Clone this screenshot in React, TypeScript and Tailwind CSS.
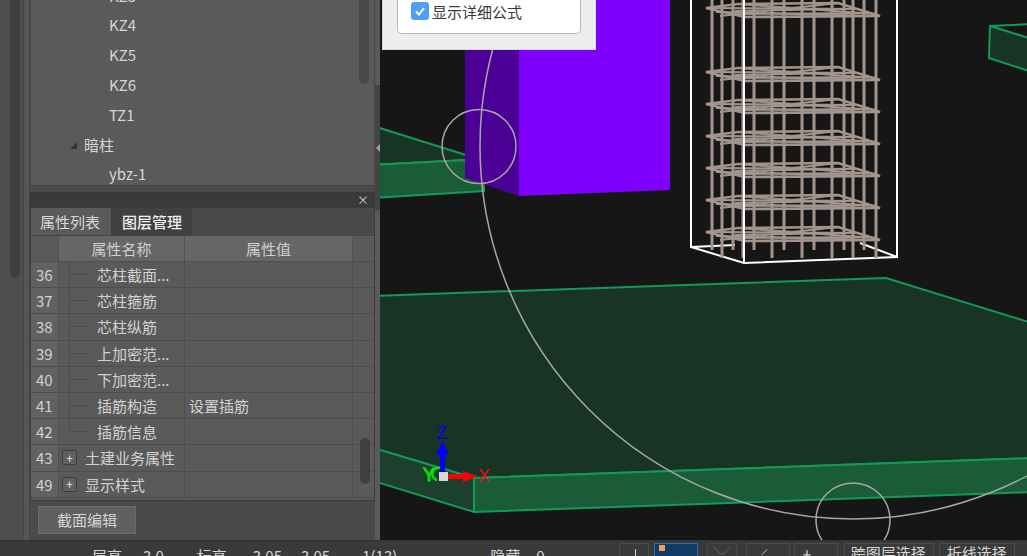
const FONT = "font-['Noto_Sans_CJK_SC','Noto_Sans',sans-serif]";

const TREE_ROWS = [
  { label: 'KZ3', indent: 'pl-[78px]' },
  { label: 'KZ4', indent: 'pl-[78px]' },
  { label: 'KZ5', indent: 'pl-[78px]' },
  { label: 'KZ6', indent: 'pl-[78px]' },
  { label: 'TZ1', indent: 'pl-[78px]' },
  { label: '暗柱', indent: 'pl-[55px]', group: true },
  { label: 'ybz-1', indent: 'pl-[78px]' },
];

const PROP_ROWS = [
  { no: 36, name: '芯柱截面...' },
  { no: 37, name: '芯柱箍筋' },
  { no: 38, name: '芯柱纵筋' },
  { no: 39, name: '上加密范...' },
  { no: 40, name: '下加密范...' },
  { no: 41, name: '插筋构造', value: '设置插筋' },
  { no: 42, name: '插筋信息', last: true },
  { no: 43, name: '土建业务属性', plus: true },
  { no: 49, name: '显示样式', plus: true },
];

const BAR_X = [712, 722, 733, 743, 754, 772, 784, 802, 814, 832, 844, 853, 864, 876];
const STIRRUP_Y = [-22, 8, 72, 104, 136, 168, 200, 232];

function Stirrup({ y }: { y: number }) {
  return (
    <g>
      <path d={`M706 ${y}L745 ${y + 9}L880 ${y + 8}L838 ${y - 5}L738 ${y - 4}Z`} strokeWidth="2.6" />
      <path d={`M706 ${y}L858 ${y + 1}M716 ${y + 4}L880 ${y + 8}M738 ${y - 4}L876 ${y + 6}`} strokeWidth="2.2" />
      <path d={`M720 ${y + 8}L838 ${y - 5}M735 ${y + 3}L845 ${y + 1}M745 ${y + 6}L868 ${y + 5}`} strokeWidth="2" />
    </g>
  );
}

function Scene() {
  return (
    <svg viewBox="380 0 647 540" className="block h-full w-full">
      <rect x="380" y="0" width="647" height="540" fill="#161616" />

      {/* left slab */}
      <polygon points="370,125 466,155 466,160 370,165" fill="#183425" stroke="#139a58" strokeWidth="2" />
      <polygon points="370,165 466,160 484,185 484,191 370,198" fill="#1a5c38" stroke="#139a58" strokeWidth="2" />

      {/* column */}
      <polygon points="465,0 519,0 519,196 465,178" fill="#4b0096" />
      <polygon points="519,0 670,0 670,190 519,196" fill="#8000ff" />

      {/* floor slab */}
      <polygon points="370,296 886,278 1035,324 1035,458 474,478 370,447" fill="#183425" stroke="#139a58" strokeWidth="2" />
      <polygon points="370,447 474,478 474,512 370,480" fill="#1c3f2e" stroke="#139a58" strokeWidth="2" />
      <polygon points="474,478 1035,458 1035,492 474,512" fill="#1a5c38" stroke="#139a58" strokeWidth="2" />

      {/* beam on the right */}
      <polygon points="990,26 1035,24 1035,40" fill="#161616" stroke="#139a58" strokeWidth="2" />
      <polygon points="990,26 1035,40 1035,73 989,58" fill="#183425" stroke="#139a58" strokeWidth="2" />

      {/* bounding box */}
      <g stroke="#ffffff" strokeWidth="2" fill="none">
        <path d="M691 -5V247L744 263L897 257V-5M691 247L735 245M860 243L897 257" />
      </g>

      {/* rebar cage */}
      <g stroke="#a3948c" strokeWidth="3" fill="none">
        {BAR_X.map((x, i) => (
          <path key={x} d={`M${x} 0V${i % 2 ? 258 : 250}`} />
        ))}
        {STIRRUP_Y.map((y) => (
          <Stirrup key={y} y={y} />
        ))}
      </g>

      <path d="M744 0V263" stroke="#ffffff" strokeWidth="2" fill="none" />

      {/* grips */}
      <g fill="none" stroke="#aaa6a2" strokeWidth="1.5">
        <circle cx="853" cy="146" r="373" />
        <circle cx="479" cy="146.5" r="37" />
        <circle cx="853" cy="520" r="37" />
      </g>

      {/* axes */}
      <rect x="440" y="449" width="5" height="26" fill="#0000ff" />
      <polygon points="442.5,441 449,455 436,455" fill="#0000ff" />
      <text x="442" y="439" textAnchor="middle" fontSize="18" fill="#0000e6" fontFamily="Liberation Sans, sans-serif">Z</text>
      <rect x="447" y="474" width="17" height="5" fill="#ff0000" />
      <polygon points="478,476.5 463,471 463,482" fill="#ff0000" />
      <text x="484" y="482" textAnchor="middle" fontSize="18" fill="#e01010" fontFamily="Liberation Sans, sans-serif">X</text>
      <text x="429" y="481" textAnchor="middle" fontSize="18" fill="#00e600" stroke="#00e600" strokeWidth="1" fontFamily="Liberation Sans, sans-serif">Y</text>
      <path d="M440 468A5 5 0 0 0 437 480" fill="none" stroke="#00e600" strokeWidth="2.5" />
      <rect x="439" y="472" width="9" height="9" fill="#d8d8d8" />
    </svg>
  );
}

function PropRow({ row }: { row: (typeof PROP_ROWS)[number] }) {
  return (
    <div className="flex h-[26.2px] border-b border-[#4d4d4d] text-[15px] leading-[25px] text-[#d2d2d2]">
      <div className="w-[27px] bg-[#616161] pl-[5px]">{row.no}</div>
      <div className="flex w-[126px] border-l border-[#525252]">
        {row.plus ? (
          <>
            <div className="ml-[3px] mt-[5px] flex h-[15px] w-[15px] items-center justify-center rounded-[2px] border border-[#3c3c3c] bg-[#606060] text-[12px] leading-none text-[#e8e8e8]">
              +
            </div>
            <span className="ml-[8px] whitespace-nowrap">{row.name}</span>
          </>
        ) : (
          <>
            <div className={`ml-[10px] w-[21px] border-l border-[#4d4d4d] ${row.last ? 'h-[13px]' : 'h-[26px]'}`}>
              <div className="h-[13px] border-b border-[#4d4d4d]" />
            </div>
            <span className="ml-[7px] whitespace-nowrap">{row.name}</span>
          </>
        )}
      </div>
      <div className="w-[169px] border-x border-[#4f4f4f] pl-[4px]">{row.value}</div>
    </div>
  );
}

function PropPanel() {
  return (
    <div className="relative flex h-[294px] flex-col border border-[#3d3d3d] bg-[#5a5a5a]">
      <div className="flex h-[28px] border-b border-[#444444] bg-[#4a4a4a] text-[15px] leading-[27px]">
        <div className="w-[80px] bg-[#5a5a5a] pl-[9px] text-[#d8d8d8]">属性列表</div>
        <div className="w-[81px] border-x border-[#3c3c3c] bg-[#404040] pl-[10px] font-medium text-[#f0f0f0]">图层管理</div>
      </div>
      <div className="flex h-[26px] border-b border-[#4d4d4d] text-center text-[15px] leading-[25px] text-[#d0d0d0]">
        <div className="w-[27px] bg-[#5a5a5a]" />
        <div className="w-[126px] border-l border-[#525252] bg-[#666666]">属性名称</div>
        <div className="w-[169px] border-x border-[#525252] bg-[#666666]">属性值</div>
      </div>
      {PROP_ROWS.map((row) => (
        <PropRow key={row.no} row={row} />
      ))}
      <div className="absolute left-[329px] top-[230px] h-[46px] w-[10px] rounded-[5px] bg-[#3f3f3f]" />
    </div>
  );
}

function StatusBar() {
  return (
    <div className="flex h-[16px] items-start overflow-hidden border-t border-[#333333] bg-[#3a3a3a] pt-[2px] text-[15px] leading-[20px] whitespace-nowrap text-[#d6d6d6] *:shrink-0">
      <span className="ml-[92px] mt-[3px]">层高</span>
      <span className="ml-[21px] mt-[3px]">3.0</span>
      <span className="ml-[33px] mt-[3px]">标高</span>
      <span className="ml-[26px] mt-[3px]">3.05</span>
      <span className="ml-[19px] mt-[3px]">3.05</span>
      <span className="ml-[32px] mt-[3px]">1(13)</span>
      <span className="ml-[93px] mt-[3px]">隐藏</span>
      <span className="ml-[16px] mt-[3px]">0</span>
      <div className="ml-[74px] flex h-[20px] w-[30px] items-start justify-center border border-[#4c4c4c] pl-[3px] pt-[5px]">
        <div className="h-[10px] w-px bg-[#d6d6d6]" />
      </div>
      <div className="ml-[5px] h-[20px] w-[44px] border border-[#2a6fb5] bg-[#113a66] pl-[4px] pt-[1px]">
        <div className="h-[6px] w-[6px] bg-[#f0a050]" />
      </div>
      <svg className="ml-[9px] h-[20px] w-[30px] border border-[#484848]" viewBox="0 0 30 20">
        <path d="M5 3L15 12L25 3" fill="none" stroke="#6a6a6a" />
      </svg>
      <svg className="ml-[9px] h-[20px] w-[44px] border border-[#4c4c4c]" viewBox="0 0 44 20">
        <path d="M15 12L21 6" fill="none" stroke="#d0d0d0" />
      </svg>
      <svg className="ml-[4px] h-[20px] w-[44px] border border-[#4c4c4c]" viewBox="0 0 44 20">
        <path d="M8 12H16M12 7V16" fill="none" stroke="#d0d0d0" strokeWidth="1.5" />
      </svg>
      <div className="ml-[6px] h-[20px] w-[90px] border border-[#4c4c4c] pl-[6px] leading-[18px]">跨图层选择</div>
      <div className="ml-[5px] h-[20px] w-[76px] border border-[#4c4c4c] pl-[7px] leading-[18px]">折线选择</div>
    </div>
  );
}

export default function App() {
  return (
    <div className={`flex h-[556px] w-[1027px] flex-col overflow-hidden bg-[#4a4a4a] ${FONT}`}>
      <div className="flex h-[540px]">
        {/* outer scroll strip */}
        <div className="flex w-[30px] bg-[#4e4e4e]">
          <div className="ml-[10px] h-[278px] w-[10px] rounded-b-[5px] bg-[#3f3f3f]" />
          <div className="ml-[3px] w-[7px] border-x border-l-[#454545] border-r-[#444444] bg-[#565656]" />
        </div>

        {/* left column */}
        <div className="flex w-[345px] flex-col">
          <div className="relative h-[186px] overflow-hidden border border-t-0 border-[#454545] bg-[#5a5a5a] text-[15px] text-[#d6d6d6]">
            <div className="-mt-[19px]">
              {TREE_ROWS.map((row) => (
                <div key={row.label} className={`flex h-[29.8px] items-center ${row.indent}`}>
                  {row.group && <div className="-ml-[16px] mr-[7px] mt-[2px] h-0 w-0 border-b-[7px] border-l-[7px] border-b-[#333333] border-l-transparent" />}
                  <span>{row.label}</span>
                </div>
              ))}
            </div>
            <div className="absolute right-[5px] top-0 h-[84px] w-[10px] rounded-b-[5px] bg-[#4a4a4a]" />
          </div>
          <div className="mt-[6px] flex h-[15px] items-center justify-end bg-[#3a3a3a] pr-[6px] text-[12px] leading-none text-[#cfcfcf]">
            ×
          </div>
          <PropPanel />
          <div className="flex-1 pl-[8px] pt-[5px]">
            <div className="flex h-[28px] w-[98px] items-center justify-center border border-[#6c6c6c] bg-[#606060] text-[15px] text-[#d6d6d6]">
              截面编辑
            </div>
          </div>
        </div>

        {/* splitter */}
        <div className="flex w-[5px] flex-col bg-[#5a5a5a]">
          <div className="mt-[85px] flex h-[125px] items-center justify-end bg-[#434343]">
            <div className="h-0 w-0 border-y-[4px] border-r-[4px] border-y-transparent border-r-[#a0a0a0]" />
          </div>
        </div>

        {/* viewport */}
        <div className="relative flex-1">
          <Scene />
          <div className="absolute left-[2px] top-0 h-[50px] w-[214px] border border-t-0 border-[#d8d8d8] bg-[#eeeeee] px-[14px]">
            <div className="flex h-[34px] items-start rounded-b-[5px] border border-t-0 border-[#b8b8b8] bg-white pl-[13px] pt-[2px]">
              <div className="flex h-[18px] w-[18px] items-center justify-center rounded-[3px] bg-[#4f9ff5]">
                <svg width="12" height="12" viewBox="0 0 12 12">
                  <path d="M2 6.5L5 9.5L10 3" fill="none" stroke="#ffffff" strokeWidth="2" />
                </svg>
              </div>
              <span className="ml-[3px] text-[15px] leading-[20px] text-[#3a3a3a]">显示详细公式</span>
            </div>
          </div>
        </div>
      </div>
      <StatusBar />
    </div>
  );
}
